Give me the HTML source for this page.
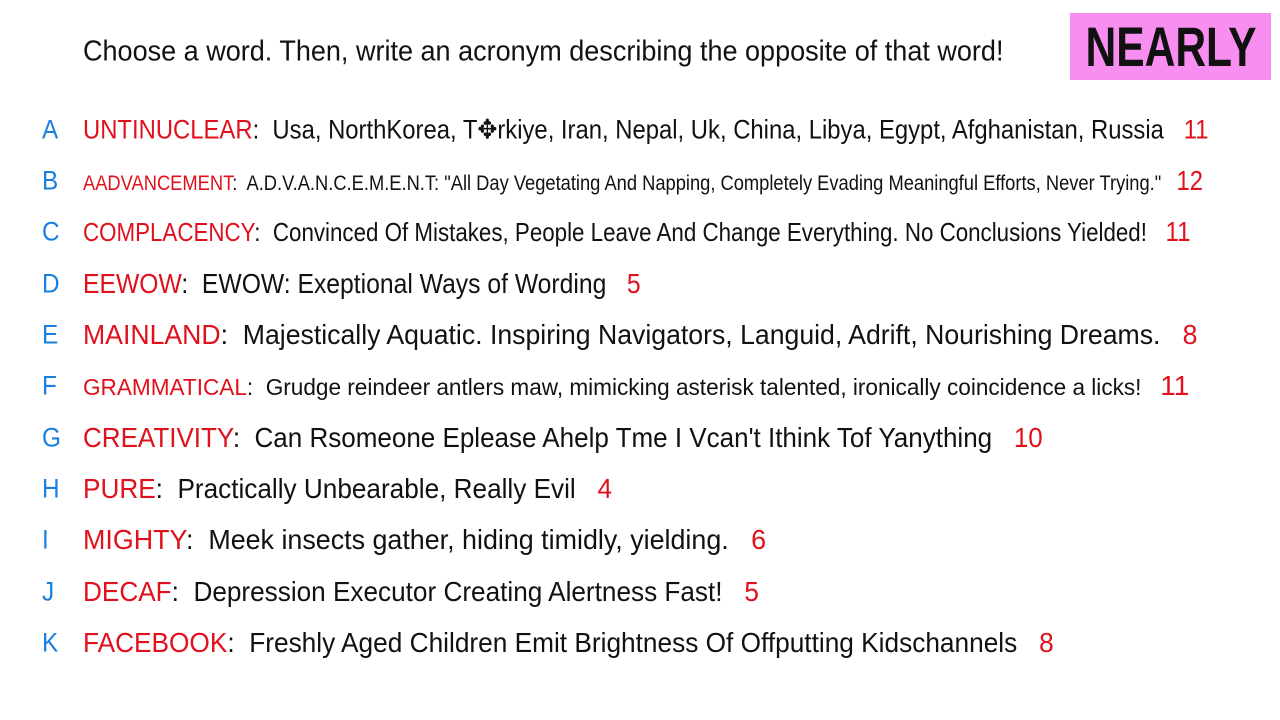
<!DOCTYPE html><html><head><meta charset="utf-8"><style>
body{margin:0;width:1280px;height:720px;background:#fff;position:relative;overflow:hidden;font-family:"Liberation Sans",sans-serif;color:#111}
.k{position:absolute;left:42px;color:#1a7fe0;font-size:27px;line-height:1;transform:translateY(-50%) scaleX(0.9);transform-origin:0 50%}
.l{position:absolute;left:83px;white-space:nowrap;line-height:1;transform-origin:0 50%}
.r{color:#e0101c}
.n{color:#e0101c}
#h{position:absolute;left:83px;top:52px;transform-origin:0 50%;transform:translateY(-50%) scaleX(0.932);font-size:29px;white-space:nowrap;line-height:1}
#nb{position:absolute;left:1070px;top:13px;width:201px;height:67px;background:#f78ef0;color:#111;overflow:hidden}
#nb span{position:absolute;left:50%;top:50%;font-size:56px;line-height:1;font-weight:bold;transform:translate(-50%,-50%) scaleX(0.76);white-space:nowrap}
</style></head><body>
<div id="h">Choose a word. Then, write an acronym describing the opposite of that word!</div>
<div id="nb"><span>NEARLY</span></div>
<div class="k" style="top:130px">A</div><div class="k" style="top:181px">B</div><div class="k" style="top:232px">C</div><div class="k" style="top:284px">D</div><div class="k" style="top:335px">E</div><div class="k" style="top:386px">F</div><div class="k" style="top:438px">G</div><div class="k" style="top:489px">H</div><div class="k" style="top:540px">I</div><div class="k" style="top:592px">J</div><div class="k" style="top:643px">K</div>
<div class="l" style="top:130px;font-size:27px;transform:translateY(-50%) scaleX(0.883)"><span class="r">UNTINUCLEAR</span>:&nbsp; Usa, NorthKorea, T✥rkiye, Iran, Nepal, Uk, China, Libya, Egypt, Afghanistan, Russia &nbsp; <span class="n">11</span></div>
<div class="l" style="top:181px;font-size:21.6px;transform:translateY(-50%) scaleX(0.848)"><span class="r">AADVANCEMENT</span>:&nbsp; A.D.V.A.N.C.E.M.E.N.T: "All Day Vegetating And Napping, Completely Evading Meaningful Efforts, Never Trying." &nbsp; <span class="n" style="font-size:28px">12</span></div>
<div class="l" style="top:232px;font-size:26px;transform:translateY(-50%) scaleX(0.859)"><span class="r">COMPLACENCY</span>:&nbsp; Convinced Of Mistakes, People Leave And Change Everything. No Conclusions Yielded! &nbsp; <span class="n" style="font-size:28px">11</span></div>
<div class="l" style="top:284px;font-size:28px;transform:translateY(-50%) scaleX(0.882)"><span class="r">EEWOW</span>:&nbsp; EWOW: Exeptional Ways of Wording &nbsp; <span class="n">5</span></div>
<div class="l" style="top:335px;font-size:28px;transform:translateY(-50%) scaleX(0.951)"><span class="r">MAINLAND</span>:&nbsp; Majestically Aquatic. Inspiring Navigators, Languid, Adrift, Nourishing Dreams. &nbsp; <span class="n">8</span></div>
<div class="l" style="top:386px;font-size:22.7px;transform:translateY(-50%) scaleX(0.995)"><span class="r">GRAMMATICAL</span>:&nbsp; Grudge reindeer antlers maw, mimicking asterisk talented, ironically coincidence a licks! &nbsp; <span class="n" style="font-size:28px">11</span></div>
<div class="l" style="top:438px;font-size:28px;transform:translateY(-50%) scaleX(0.929)"><span class="r">CREATIVITY</span>:&nbsp; Can Rsomeone Eplease Ahelp Tme I Vcan't Ithink Tof Yanything &nbsp; <span class="n">10</span></div>
<div class="l" style="top:489px;font-size:28px;transform:translateY(-50%) scaleX(0.934)"><span class="r">PURE</span>:&nbsp; Practically Unbearable, Really Evil &nbsp; <span class="n">4</span></div>
<div class="l" style="top:540px;font-size:28px;transform:translateY(-50%) scaleX(0.959)"><span class="r">MIGHTY</span>:&nbsp; Meek insects gather, hiding timidly, yielding. &nbsp; <span class="n">6</span></div>
<div class="l" style="top:592px;font-size:28px;transform:translateY(-50%) scaleX(0.934)"><span class="r">DECAF</span>:&nbsp; Depression Executor Creating Alertness Fast! &nbsp; <span class="n">5</span></div>
<div class="l" style="top:643px;font-size:28px;transform:translateY(-50%) scaleX(0.937)"><span class="r">FACEBOOK</span>:&nbsp; Freshly Aged Children Emit Brightness Of Offputting Kidschannels &nbsp; <span class="n">8</span></div>
</body></html>
